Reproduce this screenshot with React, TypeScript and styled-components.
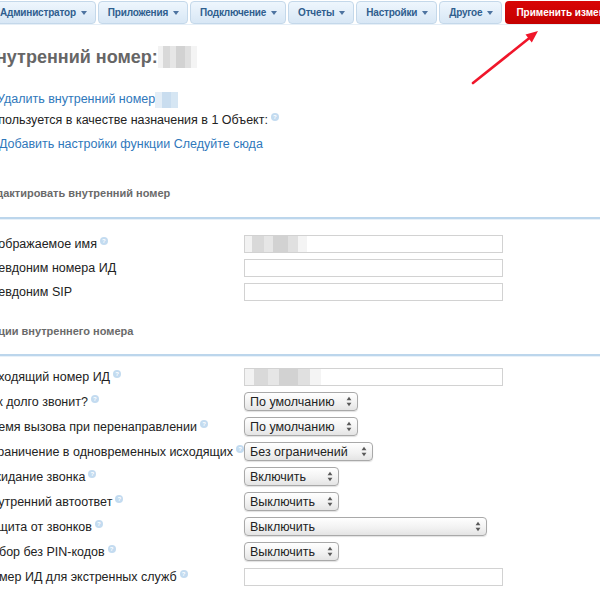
import React from "react";
import styled, { createGlobalStyle } from "styled-components";

const Global = createGlobalStyle`
  html, body { margin: 0; padding: 0; background: #fff; }
  body {
    font-family: "Liberation Sans", Arial, sans-serif;
    width: 600px;
    height: 600px;
    overflow: hidden;
  }
`;

const Page = styled.div`
  position: relative;
  width: 600px;
  height: 600px;
  overflow: hidden;
`;

const NavBar = styled.nav`
  display: flex;
  gap: 2px;
  margin-left: -10px;
  padding-top: 1px;
  height: 25px;
  box-sizing: border-box;
  white-space: nowrap;
  border-bottom: 1px solid #e6eff7;
`;

const Tab = styled.div`
  display: flex;
  align-items: center;
  flex: none;
  height: 23px;
  box-sizing: border-box;
  padding: 0 8px 0 9px;
  border: 1px solid #c4d8ea;
  border-radius: 4px;
  background: linear-gradient(#eef6fd, #d8e7f5);
  color: #2f5e8e;
  font-size: 10px;
  font-weight: bold;
  letter-spacing: -0.2px;
`;

const Caret = styled.span`
  width: 0;
  height: 0;
  margin-left: 5px;
  border-left: 3.5px solid transparent;
  border-right: 3.5px solid transparent;
  border-top: 4px solid #4d73a0;
`;

const ApplyButton = styled.div`
  display: flex;
  align-items: center;
  flex: none;
  height: 23px;
  box-sizing: border-box;
  padding: 0 10px 0 11px;
  margin-left: 1px;
  border-radius: 4px;
  background: linear-gradient(#d80606, #c40000);
  color: #fff;
  font-size: 10px;
  font-weight: bold;
`;

const Content = styled.main`
  margin-left: -17px;
`;

const Heading = styled.h1`
  margin: 20px 0 0;
  height: 24px;
  line-height: 24px;
  font-size: 18px;
  font-weight: bold;
  color: #666;
  display: flex;
  align-items: center;
`;

const Blur = styled.span<{ $w: number; $h: number; $tone: "gray" | "blue" }>`
  display: inline-block;
  width: ${(p) => p.$w}px;
  height: ${(p) => p.$h}px;
  vertical-align: middle;
  background: ${(p) =>
    p.$tone === "blue"
      ? "linear-gradient(90deg, #e4eef7 0 30%, #c9ddef 30% 70%, #d6e6f3 70% 100%)"
      : "linear-gradient(90deg, #f2f2f2 0 12%, #d9d9d9 12% 30%, #e6e6e6 30% 45%, #d2d2d2 45% 70%, #e0e0e0 70% 85%, #f4f4f4 85% 100%)"};
`;

const InfoLine = styled.div<{ $indent?: number; $top?: number; $h?: number }>`
  margin-top: ${(p) => p.$top ?? 0}px;
  height: ${(p) => p.$h ?? 22}px;
  line-height: ${(p) => p.$h ?? 22}px;
  font-size: 12.5px;
  color: #222;
  padding-left: ${(p) => p.$indent ?? 0}px;
  white-space: nowrap;
`;

const Link = styled.a`
  color: #2f78bb;
  text-decoration: none;
  cursor: pointer;
`;

const SectionTitle = styled.div<{ $top: number; $pad: number }>`
  margin-top: ${(p) => p.$top}px;
  height: 16px;
  line-height: 16px;
  font-size: 11px;
  font-weight: bold;
  color: #6a6a6a;
  padding-bottom: ${(p) => p.$pad}px;
  border-bottom: 2px solid #bcd6ec;
  box-shadow: 0 1px 0 #e8f1f9;
  margin-right: -20px;
`;

const Fields = styled.div<{ $top: number; $pitch: number }>`
  margin-top: ${(p) => p.$top}px;
  display: grid;
  grid-template-columns: 261px auto;
  grid-auto-rows: ${(p) => p.$pitch}px;
  align-items: center;
`;

const Label = styled.label`
  font-size: 12.5px;
  color: #222;
  white-space: nowrap;
`;

const Help = styled.span`
  display: inline-block;
  width: 8px;
  height: 8px;
  margin-left: 3px;
  border-radius: 50%;
  background: #c3dbf0;
  color: #fff;
  font-size: 6px;
  font-weight: bold;
  line-height: 8px;
  text-align: center;
  vertical-align: 5px;
`;

const TextInput = styled.div`
  display: flex;
  width: 259px;
  height: 18px;
  box-sizing: border-box;
  border: 1px solid #d2d2d2;
  background: #fff;
`;

const SelectBox = styled.div<{ $w: number }>`
  display: flex;
  align-items: center;
  justify-content: space-between;
  width: ${(p) => p.$w}px;
  height: 19px;
  box-sizing: border-box;
  padding: 0 5px 0 5px;
  border: 1px solid #a9a9a9;
  border-radius: 4px;
  background: linear-gradient(#ffffff, #f1f1f1 60%, #e4e4e4);
  box-shadow: 0 1px 1px rgba(0, 0, 0, 0.12);
  font-size: 12.5px;
  color: #222;
  white-space: nowrap;
`;

const Arrows = styled.svg`
  flex: none;
`;

const ArrowOverlay = styled.svg`
  position: absolute;
  left: 0;
  top: 0;
  pointer-events: none;
`;

const SelectArrows = () => (
  <Arrows width="6" height="11" viewBox="0 0 6 11">
    <path d="M3 0.8 L5.4 4.3 L0.6 4.3 Z" fill="#5a5a5a" />
    <path d="M3 10.2 L5.4 6.7 L0.6 6.7 Z" fill="#5a5a5a" />
  </Arrows>
);

const Select = ({ w, value }: { w: number; value: string }) => (
  <SelectBox $w={w}>
    <span>{value}</span>
    <SelectArrows />
  </SelectBox>
);

const H = () => <Help>?</Help>;

const tabs = ["Администратор", "Приложения", "Подключение", "Отчеты", "Настройки", "Другое"];

type Row = { label: string; help?: boolean; control: React.ReactNode };

const editRows: Row[] = [
  {
    label: "Отображаемое имя",
    help: true,
    control: (
      <TextInput>
        <Blur $w={62} $h={16} $tone="gray" />
      </TextInput>
    ),
  },
  { label: "Псевдоним номера ИД", control: <TextInput /> },
  { label: "Псевдоним SIP", control: <TextInput /> },
];

const optionRows: Row[] = [
  {
    label: "Исходящий номер ИД",
    help: true,
    control: (
      <TextInput>
        <Blur $w={76} $h={16} $tone="gray" />
      </TextInput>
    ),
  },
  { label: "Как долго звонит?", help: true, control: <Select w={114} value="По умолчанию" /> },
  { label: "Время вызова при перенаправлении", help: true, control: <Select w={114} value="По умолчанию" /> },
  { label: "Ограничение в одновременных исходящих", help: true, control: <Select w={129} value="Без ограничений" /> },
  { label: "Ожидание звонка", help: true, control: <Select w={95} value="Включить" /> },
  { label: "Внутренний автоответ", help: true, control: <Select w={95} value="Выключить" /> },
  { label: "Защита от звонков", help: true, control: <Select w={243} value="Выключить" /> },
  { label: "Набор без PIN-кодов", help: true, control: <Select w={95} value="Выключить" /> },
  { label: "Номер ИД для экстренных служб", help: true, control: <TextInput /> },
];

const renderRows = (rows: Row[]) =>
  rows.map((r) => (
    <React.Fragment key={r.label}>
      <Label>
        {r.label}
        {r.help && <H />}
      </Label>
      <div>{r.control}</div>
    </React.Fragment>
  ));

export default function App() {
  return (
    <Page>
      <Global />
      <NavBar>
        {tabs.map((t) => (
          <Tab key={t}>
            {t}
            <Caret />
          </Tab>
        ))}
        <ApplyButton>Применить изменения</ApplyButton>
      </NavBar>
      <Content>
        <Heading>
          Внутренний номер:
          <Blur $w={39} $h={22} $tone="gray" />
        </Heading>
        <InfoLine $indent={14} $top={19}>
          <Link>Удалить внутренний номер</Link>
          <Blur $w={23} $h={16} $tone="blue" />
        </InfoLine>
        <InfoLine $h={21}>
          Используется в качестве назначения в 1 Объект:
          <H />
        </InfoLine>
        <InfoLine $indent={16} $top={2}>
          <Link>Добавить настройки функции Следуйте сюда</Link>
        </InfoLine>
        <SectionTitle $top={30} $pad={16}>Редактировать внутренний номер</SectionTitle>
        <Fields $top={13} $pitch={24}>
          {renderRows(editRows)}
        </Fields>
        <SectionTitle $top={19} $pad={15}>Опции внутреннего номера</SectionTitle>
        <Fields $top={8} $pitch={25}>
          {renderRows(optionRows)}
        </Fields>
      </Content>
      <ArrowOverlay width="600" height="600" viewBox="0 0 600 600">
        <line x1="473" y1="83" x2="530" y2="37.5" stroke="#f0162a" strokeWidth="2.6" strokeLinecap="round" />
        <polygon points="538,31 531.8,42.4 525.5,34.6" fill="#f0162a" />
      </ArrowOverlay>
    </Page>
  );
}
